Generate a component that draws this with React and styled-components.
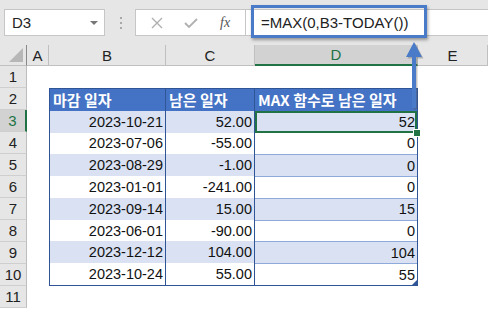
import React from "react";
import styled, { createGlobalStyle } from "styled-components";

const GlobalStyle = createGlobalStyle`
  html, body { margin: 0; padding: 0; background: #fff; }
  body { font-family: "Liberation Sans", Arial, sans-serif; overflow: hidden; }
`;

const Frame = styled.div`
  position: relative;
  width: 488px;
  height: 310px;
  overflow: hidden;
  background: #fff;
`;

const TopBar = styled.div`
  display: flex;
  align-items: center;
  height: 45px;
  padding: 0 0 0 4px;
  box-sizing: border-box;
  background: #e6e6e6;
`;

const NameBox = styled.div`
  display: flex;
  align-items: center;
  justify-content: space-between;
  width: 101px;
  height: 27px;
  box-sizing: border-box;
  padding: 0 6px 0 7px;
  background: #fff;
  border: 1px solid #c6c6c6;
  font-size: 15px;
  color: #222;
`;

const Caret = styled.span`
  width: 0;
  height: 0;
  border-left: 4px solid transparent;
  border-right: 4px solid transparent;
  border-top: 4px solid #777;
`;

const Dots = styled.div`
  display: flex;
  flex-direction: column;
  gap: 3px;
  margin: 0 13px 0 15px;
  span { width: 2px; height: 2px; background: #a8a8a8; }
`;

const FxGroup = styled.div`
  display: flex;
  align-items: center;
  justify-content: space-around;
  width: 110px;
  height: 27px;
  box-sizing: border-box;
  background: #fff;
  border: 1px solid #c6c6c6;
  border-right: none;
  padding: 0 4px;
  color: #aaa;
`;

const FxLabel = styled.span`
  font-family: "Liberation Serif", serif;
  font-style: italic;
  font-size: 14px;
  color: #555;
`;

const FormulaInput = styled.div`
  flex: 1;
  height: 27px;
  box-sizing: border-box;
  background: #fff;
  border: 1px solid #c6c6c6;
  border-right: none;
  display: flex;
  align-items: center;
  padding-left: 15px;
  font-size: 15px;
  color: #222;
`;

const Sheet = styled.div`
  display: grid;
  grid-template-columns: 27px 22px 117px 89px 163px 1fr;
  grid-template-rows: 21px repeat(11, 22px);
  color: #111;
`;

const ColHead = styled.div`
  display: flex;
  align-items: center;
  justify-content: center;
  background: ${(p) => (p.$active ? "#d2d2d2" : "#e6e6e6")};
  color: ${(p) => (p.$active ? "#217346" : "#222")};
  border-right: 1px solid #c0c0c0;
  border-bottom: ${(p) => (p.$active ? "2px solid #217346" : "1px solid #c0c0c0")};
  box-sizing: border-box;
  font-size: 15px;
`;

const Corner = styled.div`
  position: relative;
  background: #e6e6e6;
  border-right: 1px solid #888;
  border-bottom: 1px solid #c0c0c0;
  box-sizing: border-box;
  &::after {
    content: "";
    position: absolute;
    right: 3px;
    bottom: 3px;
    border-left: 14px solid transparent;
    border-bottom: 14px solid #b7b7b7;
  }
`;

const RowHead = styled.div`
  grid-column: 1;
  display: flex;
  align-items: center;
  justify-content: center;
  background: ${(p) => (p.$active ? "#d2d2d2" : "#e6e6e6")};
  color: ${(p) => (p.$active ? "#217346" : "#222")};
  border-bottom: 1px solid #cfcfcf;
  border-right: ${(p) => (p.$active ? "2px solid #217346" : "1px solid #bdbdbd")};
  box-sizing: border-box;
  font-size: 15px;
`;

const Table = styled.div`
  grid-column: 3 / 6;
  grid-row: 3 / 12;
  display: grid;
  grid-template-columns: 116px 89px 1fr;
  grid-template-rows: repeat(9, 1fr);
  border: 1px solid #2f5597;
  box-sizing: border-box;
  min-height: 0;
`;

const Cell = styled.div`
  position: relative;
  display: flex;
  align-items: center;
  justify-content: ${(p) => (p.$head ? "flex-start" : "flex-end")};
  padding: ${(p) => (p.$head ? "0 3px" : "0 2px")};
  box-sizing: border-box;
  min-height: 0;
  background: ${(p) => (p.$head ? "#4472c4" : p.$band ? "#d9e1f2" : "#fff")};
  color: ${(p) => (p.$head ? "#fff" : "#111")};
  font-family: ${(p) =>
    p.$head ? `"Noto Sans CJK KR", "Liberation Sans", sans-serif` : `"Liberation Sans", Arial, sans-serif`};
  font-weight: ${(p) => (p.$head ? 700 : 400)};
  font-size: ${(p) => (p.$head ? "15px" : "14.5px")};
  white-space: nowrap;
  border-right: ${(p) => (p.$last ? "none" : "1px solid #2f5597")};
  border-top: ${(p) => (p.$line ? "1px solid #8eaadb" : "none")};
  outline: ${(p) => (p.$selected ? "2px solid #217346" : "none")};
  outline-offset: -2px;
`;

const Handle = styled.span`
  position: absolute;
  right: -4px;
  bottom: -4px;
  width: 6px;
  height: 6px;
  background: #217346;
  border: 1px solid #fff;
  z-index: 2;
`;

const CornerMark = styled.span`
  position: absolute;
  right: 0;
  bottom: 0;
  border-left: 5px solid transparent;
  border-bottom: 5px solid #2f5597;
`;

const Highlight = styled.div`
  position: absolute;
  left: 251px;
  top: 5px;
  width: 176px;
  height: 33px;
  box-sizing: border-box;
  border: 3px solid #4a7bc8;
  box-shadow: 1px 2px 3px rgba(0, 0, 0, 0.35);
  z-index: 5;
`;

const Arrow = styled.svg`
  position: absolute;
  left: 404px;
  top: 40px;
  z-index: 6;
  overflow: visible;
`;

const cols = ["A", "B", "C", "D", "E"];

const rows = [
  ["2023-10-21", "52.00", "52"],
  ["2023-07-06", "-55.00", "0"],
  ["2023-08-29", "-1.00", "0"],
  ["2023-01-01", "-241.00", "0"],
  ["2023-09-14", "15.00", "15"],
  ["2023-06-01", "-90.00", "0"],
  ["2023-12-12", "104.00", "104"],
  ["2023-10-24", "55.00", "55"],
];

export default function App() {
  return (
    <Frame>
      <GlobalStyle />
      <TopBar>
        <NameBox>
          D3
          <Caret />
        </NameBox>
        <Dots>
          <span />
          <span />
          <span />
        </Dots>
        <FxGroup>
          <svg width="12" height="12" viewBox="0 0 12 12">
            <path d="M1 1 L11 11 M11 1 L1 11" stroke="#b0b0b0" strokeWidth="1.4" />
          </svg>
          <svg width="14" height="12" viewBox="0 0 14 12">
            <path d="M1 6 L5 10 L13 2" stroke="#b0b0b0" strokeWidth="1.8" fill="none" />
          </svg>
          <FxLabel>fx</FxLabel>
        </FxGroup>
        <FormulaInput>=MAX(0,B3-TODAY())</FormulaInput>
      </TopBar>
      <Highlight />
      <Arrow width="20" height="70" viewBox="0 0 20 70">
        <g transform="translate(1.5,1.5)" opacity="0.35">
          <path d="M10 2 L18 17 L12 17 L12 68 L8 68 L8 17 L2 17 Z" fill="#555" />
        </g>
        <path d="M10 2 L18 17 L12 17 L12 68 L8 68 L8 17 L2 17 Z" fill="#4a7bc8" />
      </Arrow>
      <Sheet>
        <Corner />
        {cols.map((c) => (
          <ColHead key={c} $active={c === "D"}>
            {c}
          </ColHead>
        ))}
        {Array.from({ length: 11 }, (_, i) => (
          <RowHead key={i} $active={i === 2} style={{ gridRow: i + 2 }}>
            {i + 1}
          </RowHead>
        ))}
        <Table>
          <Cell $head>마감 일자</Cell>
          <Cell $head>남은 일자</Cell>
          <Cell $head $last>
            MAX 함수로 남은 일자
          </Cell>
          {rows.map((r, i) => (
            <React.Fragment key={i}>
              <Cell $band={i % 2 === 0}>{r[0]}</Cell>
              <Cell $band={i % 2 === 0}>{r[1]}</Cell>
              <Cell $band={i % 2 === 0} $last $line={i > 1} $selected={i === 0}>
                {r[2]}
                {i === 0 && <Handle />}
                {i === rows.length - 1 && <CornerMark />}
              </Cell>
            </React.Fragment>
          ))}
        </Table>
      </Sheet>
    </Frame>
  );
}
